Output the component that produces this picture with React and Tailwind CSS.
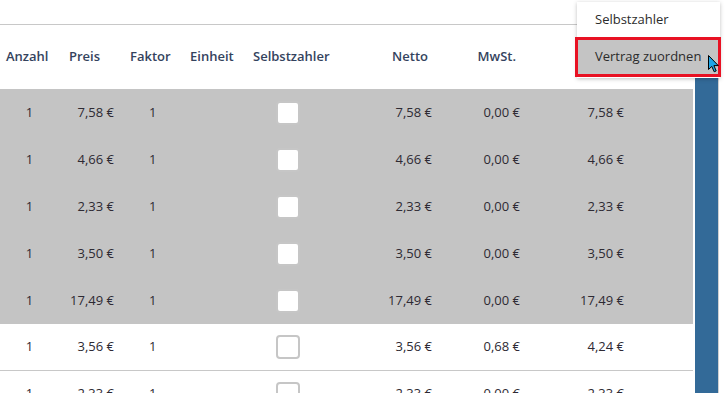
import React from "react";

const font = { fontFamily: '"Open Sans", "Noto Sans", "Liberation Sans", sans-serif' };

const rows = [
  { p: "7,58 €", n: "7,58 €", m: "0,00 €", b: "7,58 €", sel: true },
  { p: "4,66 €", n: "4,66 €", m: "0,00 €", b: "4,66 €", sel: true },
  { p: "2,33 €", n: "2,33 €", m: "0,00 €", b: "2,33 €", sel: true },
  { p: "3,50 €", n: "3,50 €", m: "0,00 €", b: "3,50 €", sel: true },
  { p: "17,49 €", n: "17,49 €", m: "0,00 €", b: "17,49 €", sel: true },
  { p: "3,56 €", n: "3,56 €", m: "0,68 €", b: "4,24 €", sel: false },
  { p: "2,33 €", n: "2,33 €", m: "0,00 €", b: "2,33 €", sel: false },
];

function Row({ r }) {
  return (
    <div
      className={
        "flex items-center h-[47px] shrink-0 text-[13px] text-[#2e2a33] " +
        (r.sel ? "bg-[#c4c4c4]" : "bg-white border-b border-[#c8c8c8]")
      }
    >
      <div className="w-[62px] pr-[3px] text-center">1</div>
      <div className="w-[60px] pr-[8px] text-right">{r.p}</div>
      <div className="w-[60px] pl-[27px]">1</div>
      <div className="w-[63px]"></div>
      <div className="w-[100px] pl-[31px]">
        <div className="w-6 h-6 rounded-[4px] border-2 border-[#c6c6c6] bg-white"></div>
      </div>
      <div className="w-[100px] pr-[13px] text-right">{r.n}</div>
      <div className="w-[95px] pr-[20px] text-right">{r.m}</div>
      <div className="w-[100px] pr-[16px] text-right">{r.b}</div>
    </div>
  );
}

export default function App() {
  return (
    <div className="relative w-[725px] h-[393px] overflow-hidden bg-white" style={font}>
      <div className="flex h-full">
        <div className="w-[693px] flex flex-col">
          <div className="h-[25px] shrink-0 border-b border-[#c8c8c8]"></div>
          <div className="flex items-center h-[64px] shrink-0 text-[13px] font-semibold text-[#34435e]">
            <div className="w-[62px] pl-[6px]">Anzahl</div>
            <div className="w-[60px] pl-[7px]">Preis</div>
            <div className="w-[60px] pl-[8px]">Faktor</div>
            <div className="w-[63px] pl-[8px]">Einheit</div>
            <div className="w-[100px] pl-[8px]">Selbstzahler</div>
            <div className="w-[100px] pr-[17px] text-right">Netto</div>
            <div className="w-[95px] pr-[24px] text-right">MwSt.</div>
          </div>
          {rows.map((r, i) => (
            <Row key={i} r={r} />
          ))}
        </div>
        <div className="w-[2px]"></div>
        <div className="w-[23px] mt-[25px] bg-[#336a98]"></div>
        <div className="w-px mt-[25px] bg-[#d0d0d0]"></div>
      </div>

      <div className="absolute left-[577px] top-[2px] w-[143px] h-[76px] bg-white shadow-[0_1px_4px_rgba(0,0,0,0.25)] flex flex-col text-[13px] text-[#2b2b2b]">
        <div className="h-[35px] flex items-center pl-[18px]">Selbstzahler</div>
        <div className="h-[40px] -ml-[2px] -mr-px flex items-center pl-[17px] bg-[#c4c4c4] border-[3px] border-[#e81123]">
          Vertrag zuordnen
        </div>
      </div>

      <svg
        className="absolute left-[708px] top-[55px]"
        width="11"
        height="18"
        viewBox="0 0 11 18"
      >
        <path
          d="M0.5 0.5 L0.5 14.5 L3.8 11.4 L6.2 16.8 L8.2 15.9 L5.9 10.6 L10.3 10.6 Z"
          fill="#1ea6e8"
          stroke="#000"
          strokeWidth="1"
          strokeLinejoin="round"
        />
      </svg>
    </div>
  );
}
